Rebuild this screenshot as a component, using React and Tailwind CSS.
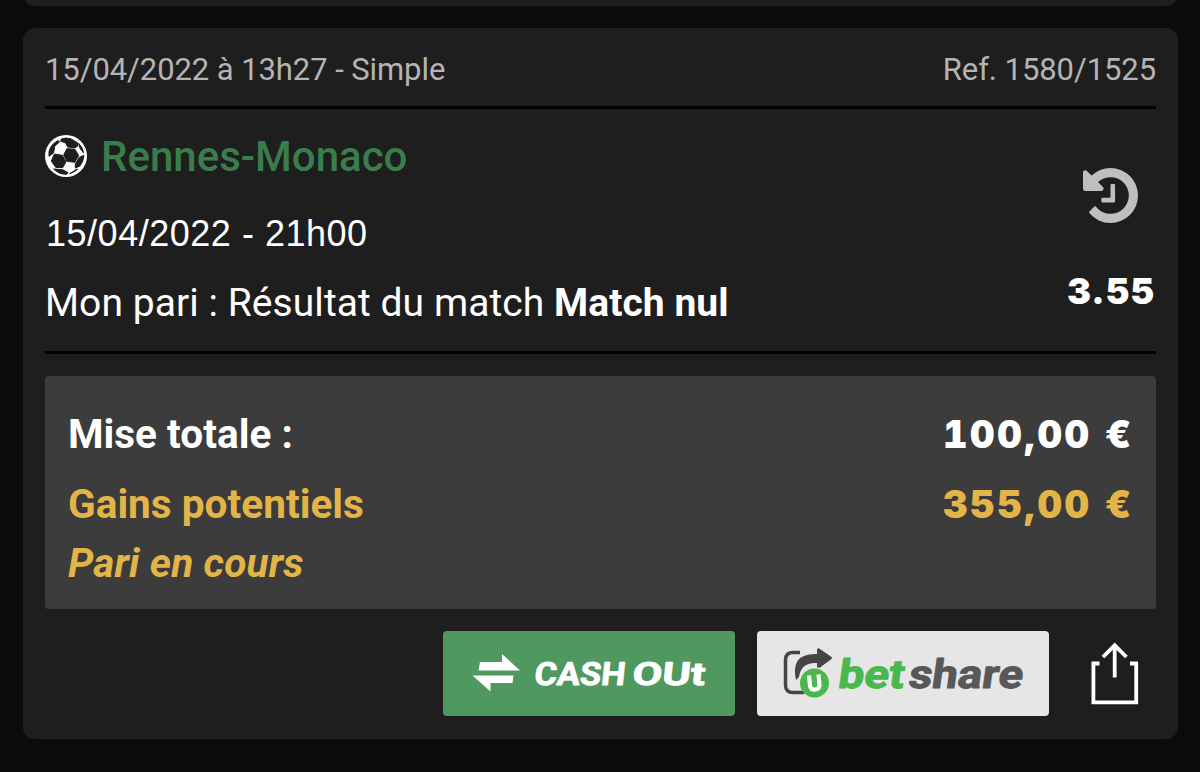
const HistoryIcon = () => (
  <svg viewBox="0 0 1536 1536" className="h-[55px] w-[55px] fill-[#bfbfbf]">
    <path
      transform="matrix(1 0 0 -1 0 1408)"
      d="M1536 640q0 -156 -61 -298t-164 -245t-245 -164t-298 -61q-172 0 -327 72.5t-264 204.5q-7 10 -6.5 22.5t8.5 20.5l137 138q10 9 25 9q16 -2 23 -12q73 -95 179 -147t225 -52q104 0 198.5 40.5t163.5 109.5t109.5 163.5t40.5 198.5t-40.5 198.5t-109.5 163.5t-163.5 109.5t-198.5 40.5q-98 0 -188 -35.5t-160 -101.5l137 -138q31 -30 14 -69q-17 -40 -59 -40h-448q-26 0 -45 19t-19 45v448q0 42 40 59q39 17 69 -14l130 -129q107 101 244.5 156.5t284.5 55.5q156 0 298 -61t245 -164t164 -245t61 -298zM896 928v-448q0 -14 -9 -23t-23 -9h-320q-14 0 -23 9t-9 23v64q0 14 9 23t23 9h224v352q0 14 9 23t23 9h64q14 0 23 -9t9 -23z"
    />
  </svg>
);

const BallIcon = () => (
  <svg viewBox="0 0 126 126" className="h-[42px] w-[42px] shrink-0">
    <circle cx="63" cy="63" r="63" fill="#fff" />
    <g fill="#1e1e1e" stroke="#1e1e1e" strokeWidth="3" strokeLinejoin="round">
      <path d="M49 12 Q63 7 77 11 L97 23 L99 33 L88 39 L68 36 L61 23 L47 19 Z" />
      <path d="M38 17 L44 20 L29 34 L26 53 L12 64 Q8 34 38 17 Z" />
      <path d="M66 41 L90 43 L101 62 L89 82 L66 79 L56 60 Z" />
      <path d="M28 57 L52 61 L63 80 L53 98 L32 97 L19 78 Z" />
      <path d="M103 67 L117 61 Q116 78 105 93 L91 99 L91 86 Z" />
      <path d="M26 102 L53 104 L69 113 L65 118 Q41 118 26 102 Z" />
      <path d="M101 25 Q113 37 116 54 L105 40 Z" />
      <path d="M84 110 L94 103 L98 103 Q86 113 74 116 Z" />
    </g>
  </svg>
);

const CashOutLogo = () => (
  <svg viewBox="0 0 292 85" className="h-[85px] w-[292px]">
    <g fill="#fff">
      <path d="M37 31 H59 V23 L77 39.5 H35.5 Z" />
      <path d="M70.5 44.5 L69.5 52 H47.5 V60.5 L29.5 44.5 Z" />
    </g>
    <g
      fill="#fff"
      stroke="#fff"
      strokeWidth="0.8"
      strokeLinejoin="round"
      className="font-['Roboto'] text-[32px] font-bold"
    >
      <text transform="translate(90.5 53.5) skewX(-6)" textLength="91" lengthAdjust="spacingAndGlyphs">
        CASH
      </text>
      <text transform="translate(188.5 53.5) skewX(-6)" textLength="73" lengthAdjust="spacingAndGlyphs">
        OUt
      </text>
    </g>
  </svg>
);

const BetShareLogo = () => (
  <svg viewBox="0 0 292 85" className="h-[85px] w-[292px]">
    <path
      d="M43 21.5 H36 Q28.5 21.5 28.5 29 V54 Q28.5 61.5 36 61.5 H47"
      fill="none"
      stroke="#454545"
      strokeWidth="3.5"
    />
    <path
      d="M39 49 Q33 22 60 23 V18.5 Q61 16.5 63 18 L74.5 26 Q75.5 27 74.5 28 L63 36.5 Q60.5 37.5 60 35.5 V32 Q44 31 42 46 Z"
      fill="#454545"
    />
    <circle cx="57.5" cy="52" r="14.5" fill="#4bb84f" />
    <path
      d="M52 44.5 L53 54.5 Q53.5 59 58 58.5 Q63 58 62.5 53.5 L61.5 43.5"
      fill="none"
      stroke="#fff"
      strokeWidth="4.2"
    />
    <g strokeWidth="1" strokeLinejoin="round" className="font-['Roboto'] text-[40px] font-bold">
      <text
        transform="translate(80 57) skewX(-8)"
        textLength="66"
        lengthAdjust="spacingAndGlyphs"
        fill="#4bb84f"
        stroke="#4bb84f"
      >
        bet
      </text>
      <text
        transform="translate(150.5 57) skewX(-8)"
        textLength="114"
        lengthAdjust="spacingAndGlyphs"
        fill="#585858"
        stroke="#585858"
      >
        share
      </text>
    </g>
  </svg>
);

const ShareIcon = () => (
  <svg viewBox="0 0 48 63" className="h-[63px] w-[48px]" fill="none" stroke="#fff" strokeWidth="3.8">
    <path d="M8.5 21.5 H2.4 V60.3 H45.2 V21.5 H39" />
    <path d="M23.7 35.5 V3" />
    <path d="M12 15 L23.7 3.3 L35.4 15" />
  </svg>
);

const App = () => {
  return (
    <div className="h-[772px] w-[1200px] overflow-hidden bg-[#0b0b0b] pr-[22px] pl-[23px] font-['Roboto',sans-serif] text-white">
      <div className="-mt-[24px] h-[30px] rounded-xl bg-[#1e1e1e]" />

      <div className="mt-[22px] h-[711px] rounded-xl bg-[#1e1e1e] px-[22px]">
        <div className="flex h-[81px] items-center justify-between border-b-3 border-black pt-[6px] text-[31px] tracking-[-0.08px] text-[#b4b4b4]">
          <span>15/04/2022 à 13h27 - Simple</span>
          <span>Ref. 1580/1525</span>
        </div>

        <div className="flex h-[245px] justify-between border-b-3 border-black">
          <div className="flex flex-col pt-[22px]">
            <div className="flex h-[50px] items-center gap-3.5">
              <BallIcon />
              <span className="text-[42px] font-medium text-[#3a7d4d]">Rennes-Monaco</span>
            </div>
            <div className="mt-[28px] pl-px font-['Liberation_Sans'] text-[36px] leading-[50px] tracking-[0.52px]">
              15/04/2022 - 21h00
            </div>
            <div className="mt-[19px] text-[39px] leading-[50px] tracking-[0.06px]">
              Mon pari : Résultat du match <b>Match nul</b>
            </div>
          </div>
          <div className="flex flex-col items-end pt-[59px]">
            <div className="mr-[18px]">
              <HistoryIcon />
            </div>
            <span className="mt-[43px] mr-px font-['Inter'] text-[36px] leading-[50px] font-black tracking-[0.8px]">
              3.55
            </span>
          </div>
        </div>

        <div className="mt-[22px] flex h-[233px] flex-col rounded bg-[#3c3c3c] pt-[33px] pr-[22px] pl-[23px] text-[40.6px] leading-[50px] font-bold">
          <div className="flex justify-between">
            <span>Mise totale :</span>
            <span className="font-['Inter'] text-[38px] font-black tracking-[2.7px] tabular-nums">100,00 €</span>
          </div>
          <div className="mt-[20px] flex justify-between text-[#e3b448]">
            <span>Gains potentiels</span>
            <span className="font-['Inter'] text-[38px] font-black tracking-[2.7px] tabular-nums">355,00 €</span>
          </div>
          <div className="mt-[9px] tracking-[0.15px] text-[#e3b448] italic">Pari en cours</div>
        </div>

        <div className="mt-[22px] flex justify-end">
          <button className="h-[85px] w-[292px] rounded bg-[#4f9960]">
            <CashOutLogo />
          </button>
          <button className="ml-[22px] h-[85px] w-[292px] rounded bg-[#e6e6e6]">
            <BetShareLogo />
          </button>
          <button className="mt-[11px] mr-[17px] ml-[42px] h-[63px]">
            <ShareIcon />
          </button>
        </div>
      </div>
    </div>
  );
};

export default App;
